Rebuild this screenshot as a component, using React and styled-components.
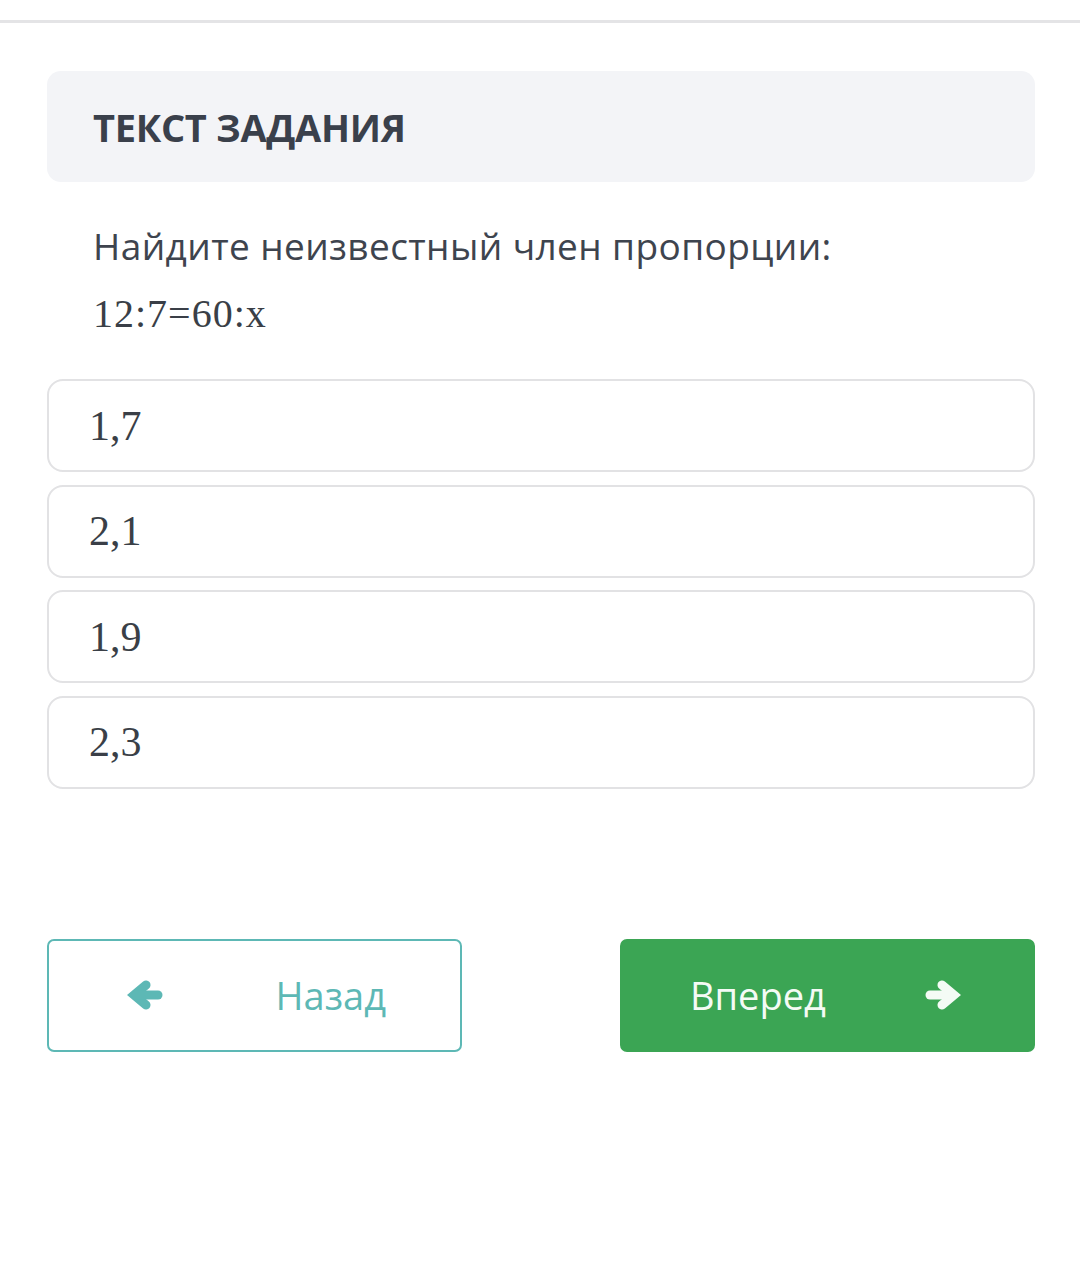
import React from "react";
import styled, { createGlobalStyle } from "styled-components";

const Global = createGlobalStyle`
  html, body { margin: 0; padding: 0; background: #ffffff; }
  body { font-family: "Open Sans", "Noto Sans", sans-serif; }
`;

const Page = styled.div`
  min-height: 1267px;
  background: #ffffff;
`;

const TopBar = styled.div`
  height: 20px;
  border-bottom: 3px solid #e4e4e6;
`;

const Content = styled.main`
  padding: 48px 45px 0 47px;
  display: flex;
  flex-direction: column;
`;

const TaskHeader = styled.div`
  height: 111px;
  background: #f3f4f7;
  border-radius: 14px;
  display: flex;
  align-items: center;
  padding: 0 46px;
  box-sizing: border-box;
`;

const TaskTitle = styled.h2`
  margin: 0;
  font-family: "Open Sans", sans-serif;
  font-weight: 700;
  font-size: 38px;
  color: #3a404b;
  letter-spacing: -0.3px;
`;

const Question = styled.div`
  padding: 39px 46px 40px;
  color: #3e444e;
`;

const QuestionText = styled.p`
  margin: 0;
  font-family: "Open Sans", sans-serif;
  font-size: 37px;
  letter-spacing: 0.4px;
  line-height: 50px;
`;

const Formula = styled.p`
  margin: 18px 0 0;
  font-family: "Liberation Serif", "DejaVu Serif", serif;
  font-size: 40px;
  letter-spacing: 1px;
  line-height: 50px;
  color: #3a3f47;
`;

const Options = styled.div`
  display: flex;
  flex-direction: column;
  gap: 12.5px;
`;

const Option = styled.div`
  height: 93px;
  box-sizing: border-box;
  border: 2px solid #e2e2e4;
  border-radius: 16px;
  display: flex;
  align-items: center;
  padding: 0 40px;
  font-family: "Liberation Serif", "DejaVu Serif", serif;
  font-size: 42px;
  color: #3a3f47;
  background: #ffffff;
`;

const Nav = styled.div`
  margin-top: 150px;
  display: flex;
  justify-content: space-between;
`;

const NavButton = styled.button`
  width: 415px;
  height: 113px;
  box-sizing: border-box;
  border-radius: 7px;
  display: flex;
  align-items: center;
  justify-content: space-between;
  font-family: "Open Sans", sans-serif;
  font-size: 38px;
  cursor: pointer;
  border: 2px solid ${(p) => (p.$primary ? "#3ba554" : "#5db8b5")};
  background: ${(p) => (p.$primary ? "#3ba554" : "#ffffff")};
  color: ${(p) => (p.$primary ? "#f4fbf5" : "#5db8b5")};
  padding: ${(p) => (p.$primary ? "0 72px 0 68px" : "0 74px 0 78px")};
`;

const ArrowSvg = styled.svg`
  width: 36px;
  height: 32px;
  flex: none;
  transform: ${(p) => (p.$right ? "scaleX(-1)" : "none")};
`;

function Arrow({ right }) {
  return (
    <ArrowSvg viewBox="0 0 36 32" $right={right} aria-hidden="true">
      <g fill="none" stroke="currentColor" strokeWidth="9">
        <path d="M19 6 L7 16 L19 26" strokeLinecap="round" strokeLinejoin="miter" strokeMiterlimit="4" />
        <path d="M10 16 H31" strokeLinecap="round" />
      </g>
    </ArrowSvg>
  );
}

export default function App() {
  const options = ["1,7", "2,1", "1,9", "2,3"];
  return (
    <Page>
      <Global />
      <TopBar />
      <Content>
        <TaskHeader>
          <TaskTitle>ТЕКСТ ЗАДАНИЯ</TaskTitle>
        </TaskHeader>
        <Question>
          <QuestionText>Найдите неизвестный член пропорции:</QuestionText>
          <Formula>12:7=60:x</Formula>
        </Question>
        <Options>
          {options.map((o) => (
            <Option key={o}>{o}</Option>
          ))}
        </Options>
        <Nav>
          <NavButton>
            <Arrow />
            <span>Назад</span>
          </NavButton>
          <NavButton $primary>
            <span>Вперед</span>
            <Arrow right />
          </NavButton>
        </Nav>
      </Content>
    </Page>
  );
}
